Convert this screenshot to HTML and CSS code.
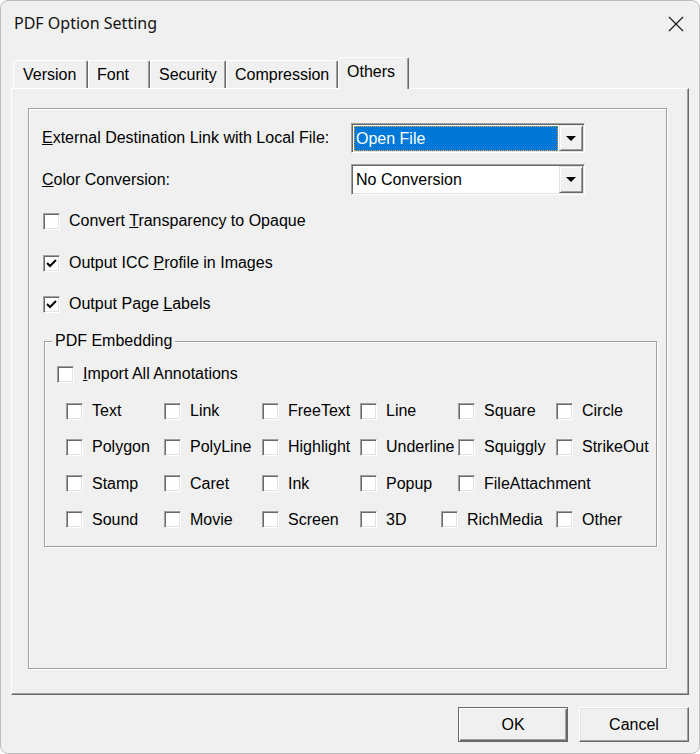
FILE: index.html
```html
<!DOCTYPE html>
<html lang="en">
<head>
    <meta charset="UTF-8">
    <title>PDF Option Setting</title>
    <link rel="stylesheet" href="styles.css">
</head>
<body>

    <div class="dialog">

        <!-- Title Bar -->
        <div class="titlebar">
            <span class="title">PDF Option Setting</span>
            <span class="close">
                <svg width="16" height="16" viewBox="0 0 16 16"><path d="M1 1 L15 15 M15 1 L1 15" stroke="#1a1a1a" stroke-width="1.2" fill="none"/></svg>
            </span>
        </div>

        <!-- Tabs -->
        <div class="tab-strip">
            <div class="tab tab-version">Version</div>
            <div class="tab tab-font">Font</div>
            <div class="tab tab-security">Security</div>
            <div class="tab tab-compression">Compression</div>
            <div class="tab tab-others active">Others</div>
        </div>

        <div class="tab-page">
            <div class="page-frame">

                <div class="field-row">
                    <span class="field-label"><u>E</u>xternal Destination Link with Local File:</span>
                    <div class="combo">
                        <span class="combo-value selected">Open File</span>
                        <span class="combo-btn"><span class="arrow"></span></span>
                    </div>
                </div>

                <div class="field-row second">
                    <span class="field-label"><u>C</u>olor Conversion:</span>
                    <div class="combo">
                        <span class="combo-value">No Conversion</span>
                        <span class="combo-btn"><span class="arrow"></span></span>
                    </div>
                </div>

                <div class="check option first">
                    <span class="box"></span>
                    <span>Convert <u>T</u>ransparency to Opaque</span>
                </div>
                <div class="check option">
                    <span class="box checked"><svg width="15" height="15" viewBox="0 0 15 15"><path d="M3 7 L6 10 L12 4" stroke="#000" stroke-width="2" fill="none"/></svg></span>
                    <span>Output ICC <u>P</u>rofile in Images</span>
                </div>
                <div class="check option last">
                    <span class="box checked"><svg width="15" height="15" viewBox="0 0 15 15"><path d="M3 7 L6 10 L12 4" stroke="#000" stroke-width="2" fill="none"/></svg></span>
                    <span>Output Page <u>L</u>abels</span>
                </div>

                <fieldset class="group">
                    <legend>PDF Embedding</legend>

                    <div class="check import-all">
                        <span class="box"></span>
                        <span><u>I</u>mport All Annotations</span>
                    </div>

                    <div class="annot-grid">
                        <div class="check"><span class="box"></span><span>Text</span></div>
                        <div class="check"><span class="box"></span><span>Link</span></div>
                        <div class="check"><span class="box"></span><span>FreeText</span></div>
                        <div class="check"><span class="box"></span><span>Line</span></div>
                        <div class="check"><span class="box"></span><span>Square</span></div>
                        <div class="check"><span class="box"></span><span>Circle</span></div>

                        <div class="check"><span class="box"></span><span>Polygon</span></div>
                        <div class="check"><span class="box"></span><span>PolyLine</span></div>
                        <div class="check"><span class="box"></span><span>Highlight</span></div>
                        <div class="check"><span class="box"></span><span>Underline</span></div>
                        <div class="check"><span class="box"></span><span>Squiggly</span></div>
                        <div class="check"><span class="box"></span><span>StrikeOut</span></div>

                        <div class="check"><span class="box"></span><span>Stamp</span></div>
                        <div class="check"><span class="box"></span><span>Caret</span></div>
                        <div class="check"><span class="box"></span><span>Ink</span></div>
                        <div class="check"><span class="box"></span><span>Popup</span></div>
                        <div class="check"><span class="box"></span><span>FileAttachment</span></div>
                        <div class="check"></div>

                        <div class="check"><span class="box"></span><span>Sound</span></div>
                        <div class="check"><span class="box"></span><span>Movie</span></div>
                        <div class="check"><span class="box"></span><span>Screen</span></div>
                        <div class="check"><span class="box"></span><span>3D</span></div>
                        <div class="check shift-left"><span class="box"></span><span>RichMedia</span></div>
                        <div class="check"><span class="box"></span><span>Other</span></div>
                    </div>
                </fieldset>

            </div>
        </div>

        <!-- Dialog Buttons -->
        <div class="actions">
            <button class="btn btn-default">OK</button>
            <button class="btn">Cancel</button>
        </div>

    </div>

</body>
</html>
```

FILE: styles.css
```css
/* Page */
body {
    margin: 0;
    background-color: #ffffff;
    font-family: "Liberation Sans", Arial, sans-serif;
    font-size: 16px;
    color: #000;
}

/* Window */
.dialog {
    width: 700px;
    height: 754px;
    box-sizing: border-box;
    border: 1px solid #bdbdbd;
    border-radius: 8px;
    background-color: #f0f0f0;
    display: flex;
    flex-direction: column;
    overflow: hidden;
}

/* Title Bar */
.titlebar {
    height: 56px;
    display: flex;
    justify-content: space-between;
    align-items: flex-start;
    padding-left: 13px;
}

.title {
    font-family: "Noto Sans", sans-serif;
    font-size: 16px;
    line-height: 22px;
    margin-top: 11px;
    color: #111;
}

.close {
    display: flex;
    margin: 15px 15px 0 0;
}

/* Tabs */
.tab-strip {
    height: 31px;
    display: flex;
    align-items: flex-end;
    padding-left: 12px;
}

.tab {
    height: 28px;
    box-sizing: border-box;
    padding-left: 8px;
    line-height: 27px;
    border-top: 1px solid #fff;
    border-left: 1px solid #fff;
    border-right: 1px solid #696969;
    border-radius: 2px 2px 0 0;
    box-shadow: inset -1px 0 0 #a0a0a0;
    background-color: #f0f0f0;
}

.tab-version { width: 75px; padding-left: 9px; }
.tab-font { width: 62px; }
.tab-security { width: 76px; }
.tab-compression { width: 112px; }
.tab-others { width: 71px; }

.tab.active {
    height: 32px;
    line-height: 28px;
    margin-bottom: -1px;
    position: relative;
    z-index: 1;
}

/* Tab Page */
.tab-page {
    height: 607px;
    box-sizing: border-box;
    margin: 0 10px;
    padding: 19px 0 0 16px;
    border-top: 1px solid #fff;
    border-left: 1px solid #fff;
    border-right: 1px solid #696969;
    border-bottom: 1px solid #696969;
    box-shadow: inset -1px -1px 0 #a0a0a0;
}

.page-frame {
    width: 639px;
    height: 561px;
    box-sizing: border-box;
    padding: 14px 0 0 13px;
    border: 1px solid #a0a0a0;
    box-shadow: inset 1px 1px 0 #fff, 1px 1px 0 #fff;
}

/* Label + Dropdown Rows */
.field-row {
    display: flex;
    align-items: center;
    height: 30px;
}

.field-row.second {
    height: 31px;
    margin-top: 11px;
}

.field-label {
    width: 309px;
}

.combo {
    width: 234px;
    height: 30px;
    box-sizing: border-box;
    display: flex;
    padding: 1px;
    border: 1px solid;
    border-color: #a0a0a0 #fff #fff #a0a0a0;
    box-shadow: inset 1px 1px 0 #696969, inset -1px -1px 0 #e3e3e3;
    background-color: #fff;
}

.second .combo {
    height: 31px;
}

.combo-value {
    flex: 1;
    margin: 1px 1px 0 1px;
    padding-left: 1px;
    line-height: 24px;
    border: 1px solid transparent;
}

.combo-value.selected {
    background-color: #0078d7;
    color: #fff;
    border: 1px dotted #e0a040;
}

.combo-btn {
    width: 24px;
    box-sizing: border-box;
    display: flex;
    align-items: center;
    justify-content: center;
    border: 1px solid;
    border-color: #e3e3e3 #696969 #696969 #e3e3e3;
    box-shadow: inset 1px 1px 0 #fff, inset -1px -1px 0 #a0a0a0;
    background-color: #f0f0f0;
}

.arrow {
    width: 0;
    height: 0;
    border-left: 5px solid transparent;
    border-right: 5px solid transparent;
    border-top: 5px solid #000;
}

/* Checkboxes */
.check {
    display: flex;
    align-items: center;
    gap: 9px;
    height: 20px;
    white-space: nowrap;
}

.box {
    width: 17px;
    height: 17px;
    flex-shrink: 0;
    box-sizing: border-box;
    display: flex;
    align-items: center;
    justify-content: center;
    border: 1px solid;
    border-color: #a0a0a0 #fff #fff #a0a0a0;
    box-shadow: inset 1px 1px 0 #696969, inset -1px -1px 0 #e3e3e3;
    background-color: #fff;
}

.option {
    margin: 22px 0 0 1px;
}

.option.first {
    margin-top: 16px;
}

.option.last {
    margin-top: 21px;
}

/* PDF Embedding Group */
.group {
    width: 613px;
    min-width: 0;
    box-sizing: border-box;
    margin: 18px 0 0 2px;
    padding: 0 0 16px 0;
    border: 1px solid #a0a0a0;
    box-shadow: inset 1px 1px 0 #fff, 1px 1px 0 #fff;
}

.group legend {
    margin-left: 7px;
    padding: 0 3px;
    line-height: 18px;
    background-color: #f0f0f0;
}

.import-all {
    margin: 14px 0 0 12px;
}

.annot-grid {
    display: grid;
    grid-template-columns: repeat(6, 98px);
    row-gap: 16.3px;
    margin: 17px 0 0 21px;
}

.shift-left {
    margin-left: -17px;
}

/* Buttons */
.actions {
    display: flex;
    justify-content: flex-end;
    gap: 11px;
    margin-top: 12px;
    padding-right: 10px;
}

.btn {
    width: 110px;
    height: 35px;
    font-family: "Liberation Sans", Arial, sans-serif;
    font-size: 16px;
    color: #000;
    background-color: #f0f0f0;
    border: 1px solid;
    border-color: #fff #696969 #696969 #fff;
    box-shadow: inset -1px -1px 0 #a0a0a0, inset 1px 1px 0 #e3e3e3;
    padding: 0;
}

.btn-default {
    border-color: #696969;
    box-shadow: inset 1px 1px 0 #fff, inset -1px -1px 0 #696969, inset -2px -2px 0 #a0a0a0;
}
```
